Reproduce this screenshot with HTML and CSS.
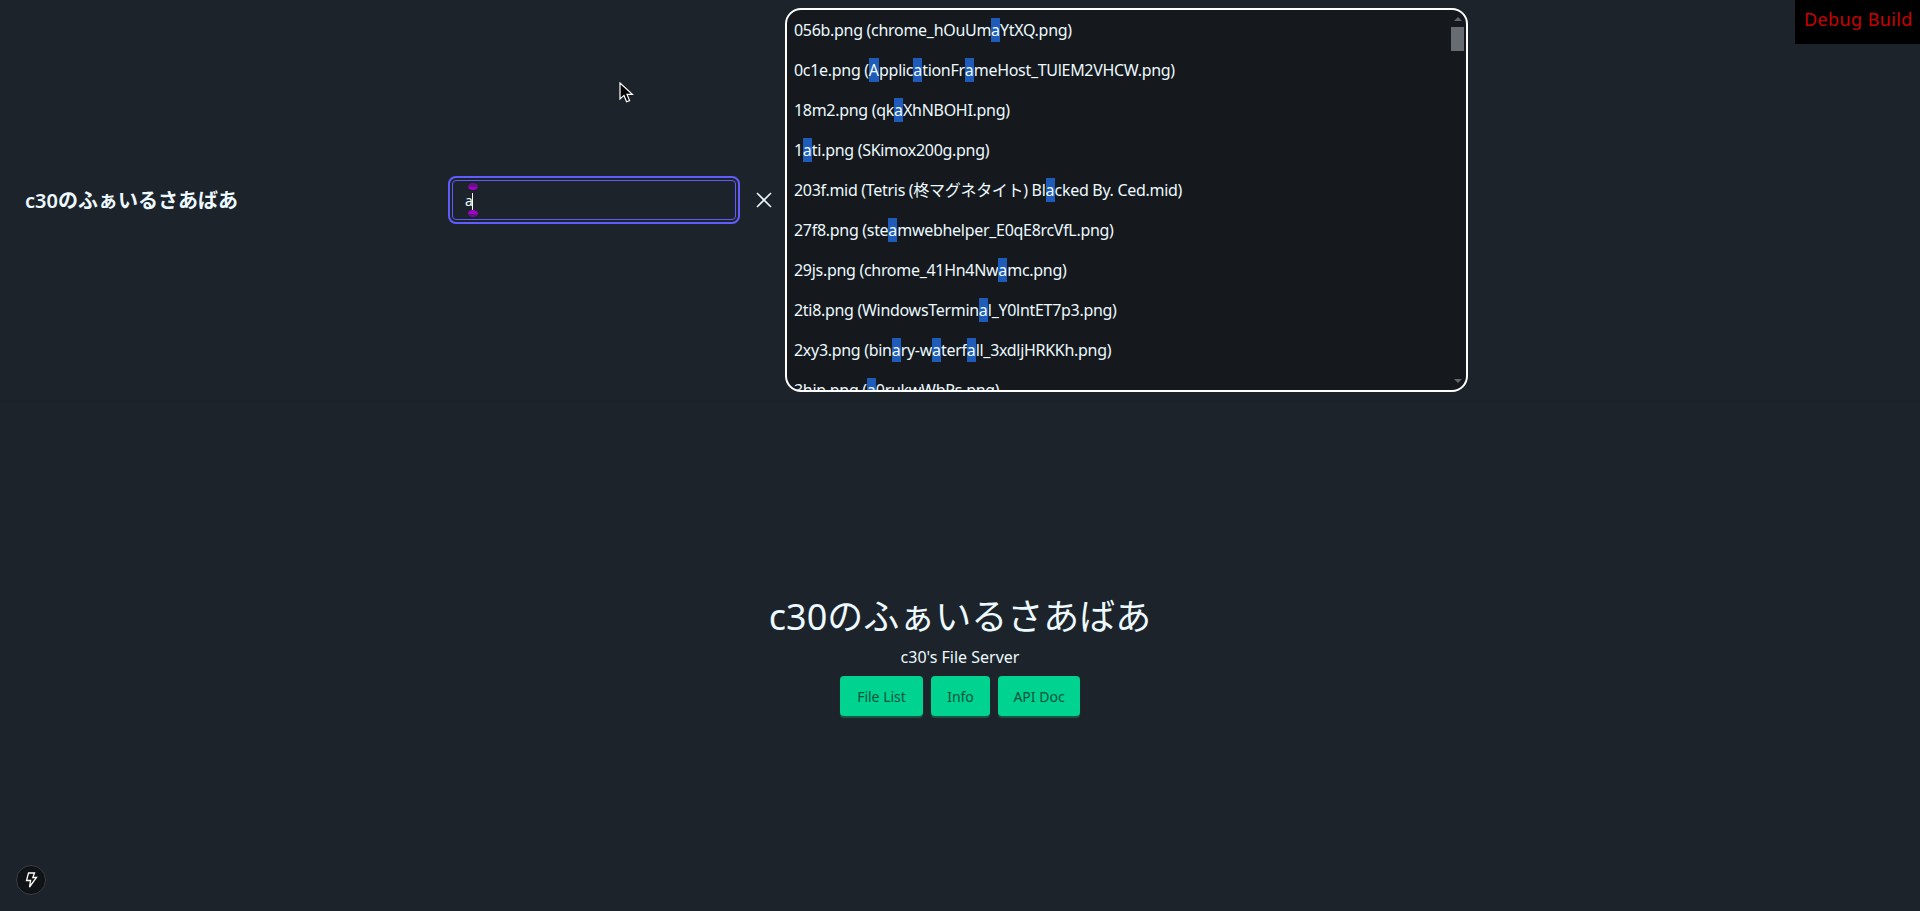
FILE: index.html
```html
<!DOCTYPE html>
<html lang="ja">
<head>
    <title>c30のふぁいるさあばあ</title>
    <link rel="stylesheet" href="styles.css">
</head>
<body>
    <header class="top-bar">
        <div class="site-name">c30のふぁいるさあばあ</div>
        <div class="search-box">
            <input class="search-input" type="text" value="a">
            <span class="caret"></span>
            <span class="handle handle-top"></span>
            <span class="handle handle-bottom"></span>
        </div>
        <button class="close-button" aria-label="Close">
            <svg width="16" height="16" viewBox="0 0 16 16" fill="none" stroke="currentColor" stroke-width="1.6">
                <path d="M1 1 15 15M15 1 1 15"/>
            </svg>
        </button>
        <div class="result-box">
            <ul class="result-list">
                <li>056b.png (chrome_hOuUm<mark>a</mark>YtXQ.png)</li>
                <li>0c1e.png (<mark>A</mark>pplic<mark>a</mark>tionFr<mark>a</mark>meHost_TUlEM2VHCW.png)</li>
                <li>18m2.png (qk<mark>a</mark>XhNBOHI.png)</li>
                <li>1<mark>a</mark>ti.png (SKimox200g.png)</li>
                <li>203f.mid (Tetris (柊マグネタイト) Bl<mark>a</mark>cked By. Ced.mid)</li>
                <li>27f8.png (ste<mark>a</mark>mwebhelper_E0qE8rcVfL.png)</li>
                <li>29js.png (chrome_41Hn4Nw<mark>a</mark>mc.png)</li>
                <li>2ti8.png (WindowsTermin<mark>a</mark>l_Y0lntET7p3.png)</li>
                <li>2xy3.png (bin<mark>a</mark>ry-w<mark>a</mark>terf<mark>a</mark>ll_3xdljHRKKh.png)</li>
                <li>3hip.png (<mark>a</mark>0rukwWbRs.png)</li>
            </ul>
            <div class="scroll-track">
                <span class="arrow-up"></span>
                <span class="scroll-thumb"></span>
                <span class="arrow-down"></span>
            </div>
        </div>
    </header>

    <main class="hero">
        <h1 class="hero-title">c30のふぁいるさあばあ</h1>
        <p class="hero-sub">c30's File Server</p>
        <div class="hero-buttons">
            <a class="hero-button button-list" href="#">File List</a>
            <a class="hero-button button-info" href="#">Info</a>
            <a class="hero-button button-api" href="#">API Doc</a>
        </div>
    </main>

    <div class="debug-badge">Debug Build</div>

    <div class="dev-indicator">
        <svg width="16" height="16" viewBox="0 0 16 16" fill="none" stroke="#fff" stroke-width="1.3">
            <path d="M5.5 1H11.5L9.8 5.5H13.5L6.5 15 7.6 8.5H3.5z"/>
        </svg>
    </div>

    <svg class="mouse-cursor" width="16" height="22" viewBox="0 0 16 22">
        <path d="M1 1v16l4-3.6 2.6 6.4 3-1.2-2.6-6.2h5.4z" fill="#000" stroke="#fff" stroke-width="1.2"/>
    </svg>
</body>
</html>
```

FILE: styles.css
```css
* {
    box-sizing: border-box;
}
html, body {
    height: 100%;
}
body {
    margin: 0;
    background: #1d232a;
    color: #ecf9ff;
    font-family: "Noto Sans", "Noto Sans CJK JP", sans-serif;
    display: flex;
    flex-direction: column;
    overflow: hidden;
}

/* header */
.top-bar {
    display: flex;
    align-items: center;
    height: 400px;
    padding: 8px 0 8px 25px;
    flex-shrink: 0;
    box-shadow: 0 1px 2px rgba(0, 0, 0, 0.08);
}
.site-name {
    width: 427px;
    margin-top: -2px;
    font-size: 20px;
    font-weight: 600;
}
.search-box {
    position: relative;
    width: 284px;
    height: 40px;
}
.search-input {
    width: 100%;
    height: 100%;
    padding: 0 12px;
    background: transparent;
    border: 1px solid #605dff;
    border-radius: 4px;
    outline: 2px solid #605dff;
    outline-offset: 2px;
    color: #ecf9ff;
    font: 14px "Noto Sans", sans-serif;
}
.caret {
    position: absolute;
    left: 20px;
    top: 13px;
    width: 1px;
    height: 17px;
    background: #fff;
}
.handle {
    position: absolute;
    left: 16px;
    width: 10px;
    height: 7px;
    border-radius: 50%;
}
.handle-top {
    top: 3px;
    background: linear-gradient(#6a1086 50%, #a000cc 50%);
}
.handle-bottom {
    top: 30px;
    background: linear-gradient(#a000cc 50%, #6a1086 50%);
}
.close-button {
    display: flex;
    margin-left: 20px;
    padding: 0;
    background: none;
    border: none;
    color: #ecf9ff;
}

/* search results */
.result-box {
    position: relative;
    width: 683px;
    height: 384px;
    margin-left: 13px;
    background: #15191e;
    border: 2px solid #fff;
    border-radius: 16px;
    overflow: hidden;
}
.result-list {
    list-style: none;
    margin: 0;
    padding: 0 0 0 7px;
    height: 100%;
    overflow: hidden;
}
.result-list li {
    padding: 8px 0;
    font-size: 16px;
    letter-spacing: -0.3px;
    line-height: 24px;
    white-space: nowrap;
}
.result-list mark {
    display: inline-block;
    line-height: 24px;
    letter-spacing: 0;
    background: #1f5cba;
    color: inherit;
}
.scroll-track {
    position: absolute;
    top: 0;
    right: 0;
    bottom: 0;
    width: 15px;
}
.arrow-up, .arrow-down {
    position: absolute;
    left: 3px;
    border-left: 4px solid transparent;
    border-right: 4px solid transparent;
}
.arrow-up {
    top: 7px;
    border-bottom: 4px solid #5f656b;
}
.arrow-down {
    bottom: 7px;
    border-top: 4px solid #5f656b;
}
.scroll-thumb {
    position: absolute;
    top: 17px;
    left: 0;
    width: 13px;
    height: 24px;
    background: #666c72;
}

/* hero */
.hero {
    flex: 1;
    display: flex;
    flex-direction: column;
    align-items: center;
    padding-top: 194px;
}
.hero-title {
    margin: 0;
    font-size: 36px;
    font-weight: 400;
    line-height: 46px;
}
.hero-sub {
    margin: 5px 0 0;
    font-size: 16px;
    line-height: 24px;
}
.hero-buttons {
    display: flex;
    gap: 8px;
    margin-top: 7px;
}
.hero-button {
    display: flex;
    align-items: center;
    justify-content: center;
    height: 40px;
    background: #00d390;
    border-radius: 4px;
    box-shadow: 0 2px 1px rgba(0, 211, 144, 0.3);
    color: #00523b;
    font-size: 14px;
    text-decoration: none;
}
.button-list {
    width: 83px;
}
.button-info {
    width: 59px;
}
.button-api {
    width: 82px;
}

/* overlays */
.debug-badge {
    position: absolute;
    top: 0;
    right: 0;
    width: 125px;
    height: 44px;
    padding-left: 9px;
    background: #000;
    color: #cc0000;
    font-size: 18px;
    letter-spacing: 0.4px;
    line-height: 38px;
}
.dev-indicator {
    position: absolute;
    left: 16px;
    bottom: 16px;
    width: 30px;
    height: 30px;
    display: flex;
    align-items: center;
    justify-content: center;
    background: #101316;
    border: 1px solid #3a3d42;
    border-radius: 50%;
}
.mouse-cursor {
    position: absolute;
    left: 619px;
    top: 82px;
}
```
